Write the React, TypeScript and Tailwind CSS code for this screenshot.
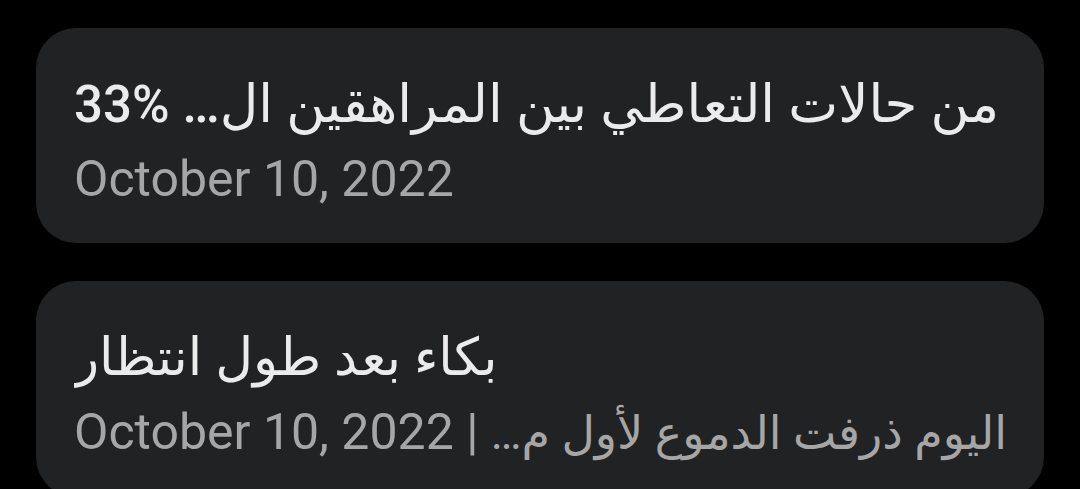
interface ArticleCardProps {
  title: React.ReactNode;
  meta: React.ReactNode;
}

function ArticleCard({ title, meta }: ArticleCardProps) {
  return (
    <div className="shrink-0 rounded-[40px] bg-[#212224] px-[38px] pt-[39px] pb-[26px]">
      <div dir="ltr" className="whitespace-nowrap overflow-hidden text-[51px] font-medium leading-[75px] text-[#ebebeb]">
        {title}
      </div>
      <div dir="ltr" className="whitespace-nowrap overflow-hidden text-[50px] leading-[75px] text-[#a6a6a6]">
        {meta}
      </div>
    </div>
  );
}

export default function App() {
  return (
    <div
      className="h-[489px] w-[1080px] overflow-hidden bg-black px-[36px] pt-[28px]"
      style={{ fontFamily: 'Roboto, "DejaVu Sans", sans-serif' }}
    >
      <div className="flex flex-col gap-[38px]">
        <ArticleCard
          title={
            <>
              33% <span dir="rtl" className="text-[53px]">من حالات التعاطي بين المراهقين ال…</span>
            </>
          }
          meta="October 10, 2022"
        />
        <ArticleCard
          title={<span dir="rtl" className="text-[52px]">بكاء بعد طول انتظار</span>}
          meta={
            <>
              October 10, 2022 | <span dir="rtl" className="text-[46px]">اليوم ذرفت الدموع لأول م…</span>
            </>
          }
        />
      </div>
    </div>
  );
}
